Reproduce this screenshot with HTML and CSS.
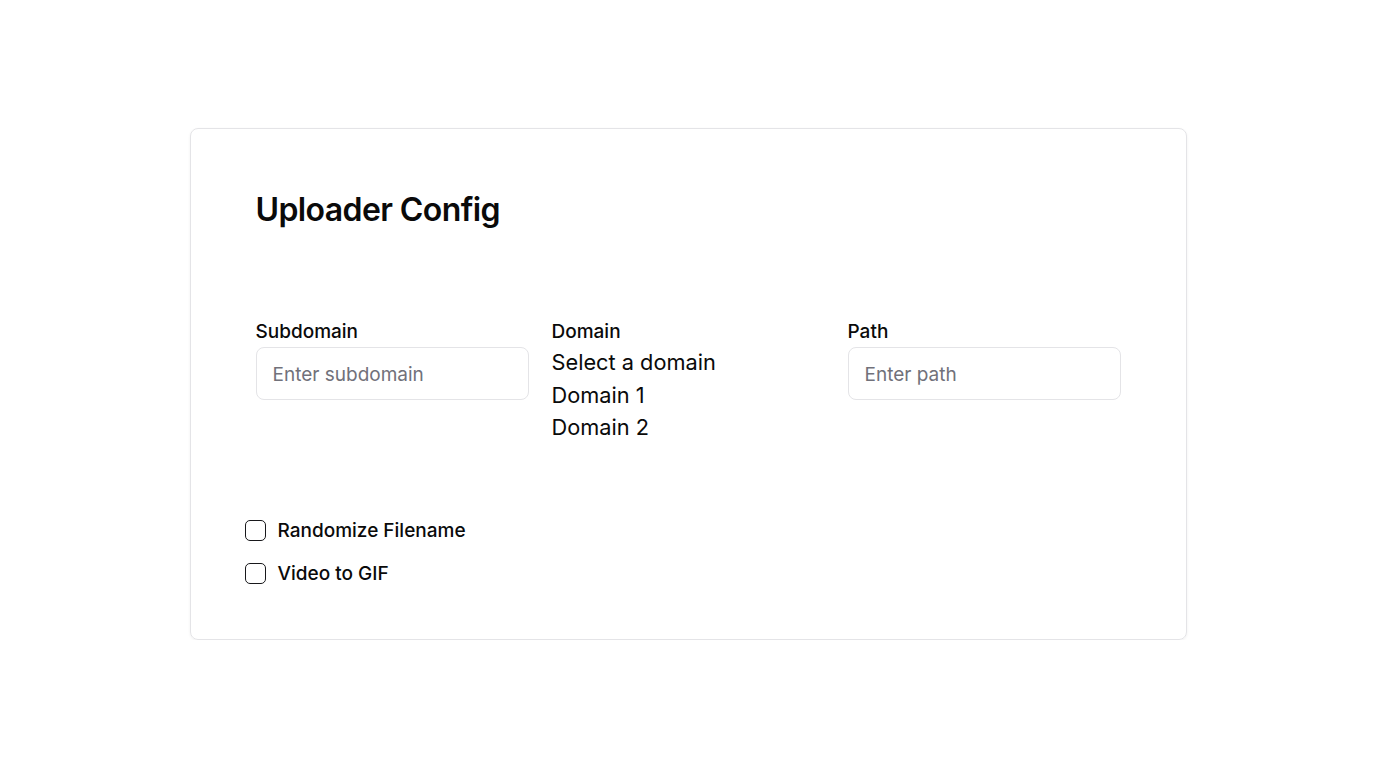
FILE: index.html
```html
<!DOCTYPE html>
<html>
<head>
<meta charset="utf-8">
<link rel="stylesheet" href="styles.css">
</head>
<body>
<main class="page">
  <section class="card">
    <h1 class="title">Uploader Config</h1>
    <div class="fields">
      <div class="field">
        <label class="label">Subdomain</label>
        <input class="input" type="text" placeholder="Enter subdomain">
      </div>
      <div class="field">
        <label class="label">Domain</label>
        <div class="options">
          <div class="option">Select a domain</div>
          <div class="option">Domain 1</div>
          <div class="option">Domain 2</div>
        </div>
      </div>
      <div class="field">
        <label class="label">Path</label>
        <input class="input" type="text" placeholder="Enter path">
      </div>
    </div>
    <div class="checks">
      <label class="check"><span class="box"></span><span>Randomize Filename</span></label>
      <label class="check"><span class="box"></span><span>Video to GIF</span></label>
    </div>
  </section>
</main>
</body>
</html>
```

FILE: styles.css
```css
* { box-sizing: border-box; }
html, body { margin: 0; padding: 0; background: #fff; }
body {
  font-family: Inter, "Noto Sans", sans-serif;
  color: #0a0a0a;
}
.page {
  display: flex;
  justify-content: center;
  padding-top: 128px;
}
.card {
  width: 997px;
  height: 512px;
  border: 1px solid #e4e4e7;
  border-radius: 8px;
  box-shadow: 0 1px 3px rgba(0,0,0,0.06);
  padding: 61px 66px 0 65px;
}
.title {
  margin: 0;
  font-size: 32px;
  font-weight: 600;
  letter-spacing: -0.6px;
  line-height: 40px;
}
.fields {
  display: grid;
  grid-template-columns: repeat(3, 272px);
  column-gap: 24px;
  margin-top: 89px;
}
.field { display: flex; flex-direction: column; }
.label {
  font-size: 19px;
  font-weight: 500;
  line-height: 26px;
  height: 28px;
}
.input {
  width: 273px;
  height: 53px;
  border: 1px solid #e4e4e7;
  border-radius: 8px;
  padding: 1px 16px 0;
  font-family: Inter, sans-serif;
  font-size: 19px;
  color: #0a0a0a;
  outline: none;
}
.input::placeholder { color: #71717a; }
.options { margin-top: -1px; }
.option {
  font-size: 21.75px;
  line-height: 32.5px;
}
.checks {
  display: flex;
  flex-direction: column;
  gap: 21px;
  margin-top: 76px;
  margin-left: -11px;
}
.check {
  display: flex;
  align-items: center;
  gap: 12px;
  font-size: 19px;
  font-weight: 500;
  line-height: 22px;
}
.box {
  width: 21px;
  height: 21px;
  border: 1.5px solid #18181b;
  border-radius: 5px;
}
```
